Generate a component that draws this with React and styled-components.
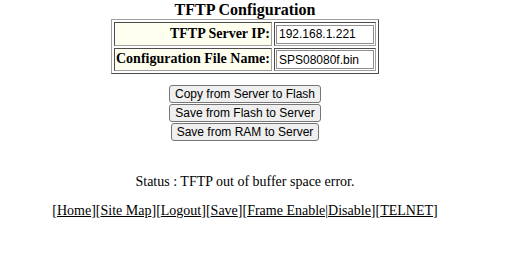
import styled, { createGlobalStyle } from "styled-components";

const GlobalStyle = createGlobalStyle`
  body {
    margin: 0 8px;
    background: #ffffff;
    font-family: "Liberation Serif", "Times New Roman", serif;
    color: #000000;
  }
`;

const Page = styled.div`
  width: 474px;
  display: flex;
  flex-direction: column;
  align-items: center;
`;

const Title = styled.div`
  font-size: 16px;
  font-weight: bold;
  line-height: 19px;
`;

const ConfigTable = styled.table`
  border: 1px outset #a0a0a0;
  border-spacing: 2px;
`;

const LabelCell = styled.td`
  border: 1px inset #a0a0a0;
  background: #fffff0;
  padding: 1px;
  font-size: 14px;
  font-weight: bold;
  text-align: right;
  white-space: nowrap;
`;

const InputCell = styled.td`
  border: 1px inset #a0a0a0;
  padding: 1px;
`;

const TextInput = styled.input`
  width: 92px;
  height: 15px;
  padding: 1px 2px;
  border: 1px solid #8f8f8f;
  font-family: "Liberation Sans", Arial, sans-serif;
  font-size: 12px;
  color: #000000;
`;

const ButtonStack = styled.div`
  display: flex;
  flex-direction: column;
  align-items: center;
  gap: 1px;
  margin-top: 11px;
`;

const Button = styled.button`
  font-family: "Liberation Sans", Arial, sans-serif;
  font-size: 12px;
  height: 18px;
  padding: 0 5px;
  background: #efefef;
  border: 1px solid #767676;
  border-radius: 3px;
  color: #000000;
`;

const Status = styled.div`
  font-size: 14px;
  margin-top: 33px;
`;

const Nav = styled.div`
  font-size: 14px;
  margin-top: 13px;

  a {
    color: #000000;
    text-decoration: underline;
  }
`;

const rows = [
  { label: "TFTP Server IP:", value: "192.168.1.221" },
  { label: "Configuration File Name:", value: "SPS08080f.bin" },
];

const links = ["Home", "Site Map", "Logout", "Save"];

export default function App() {
  return (
    <>
      <GlobalStyle />
      <Page>
        <Title>TFTP Configuration</Title>
        <ConfigTable>
          <tbody>
            {rows.map((r) => (
              <tr key={r.label}>
                <LabelCell>{r.label}</LabelCell>
                <InputCell>
                  <TextInput defaultValue={r.value} />
                </InputCell>
              </tr>
            ))}
          </tbody>
        </ConfigTable>
        <ButtonStack>
          <Button>Copy from Server to Flash</Button>
          <Button>Save from Flash to Server</Button>
          <Button>Save from RAM to Server</Button>
        </ButtonStack>
        <Status>Status : TFTP out of buffer space error.</Status>
        <Nav>
          {links.map((l) => (
            <span key={l}>
              [<a href="#">{l}</a>]
            </span>
          ))}
          [<a href="#">Frame Enable|Disable</a>][<a href="#">TELNET</a>]
        </Nav>
      </Page>
    </>
  );
}
